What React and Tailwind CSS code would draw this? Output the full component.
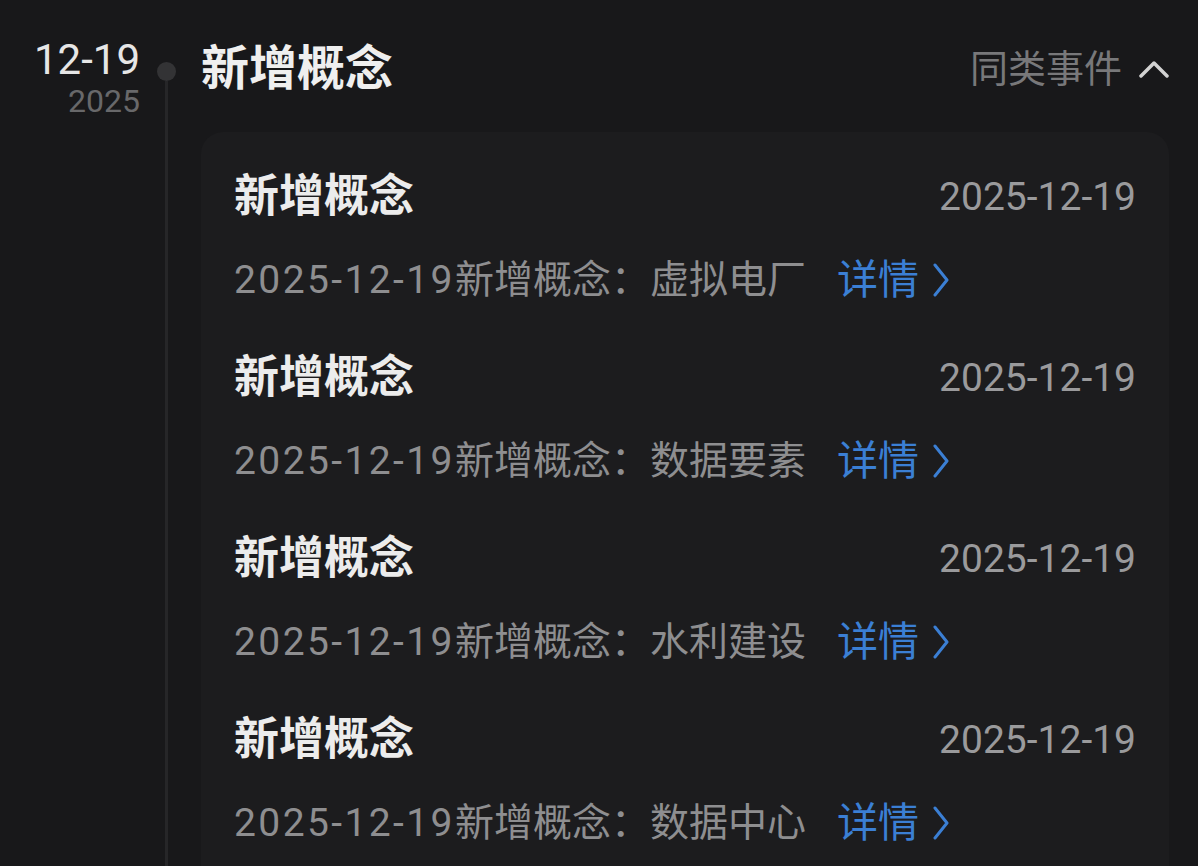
import React from 'react'

const items = ['虚拟电厂', '数据要素', '水利建设', '数据中心']

const font = { fontFamily: 'Roboto, "Noto Sans CJK SC", sans-serif' }

function ChevronRight() {
  return (
    <svg width="18" height="34" viewBox="0 0 18 34" className="ml-[13px]">
      <path d="M3 2 L15 17 L3 32" fill="none" stroke="#3b7fd4" strokeWidth="3" strokeLinecap="round" strokeLinejoin="round" />
    </svg>
  )
}

function EventItem({ name }) {
  return (
    <div className="flex flex-col">
      <div className="flex items-center justify-between h-[60px]">
        <span className="text-[45px] font-bold text-[#ececec] leading-[60px]">新增概念</span>
        <span className="text-[39px] text-[#9a9a9c] leading-[60px]">2025-12-19</span>
      </div>
      <div className="flex items-center h-[56px] mt-[25px]">
        <span className="text-[39px] text-[#8e8e90] leading-[56px]">
          <span className="tracking-[2.4px]">2025-12-19</span>新增概念：{name}
        </span>
        <span className="ml-[31px] flex items-center text-[41px] text-[#3b7fd4] leading-[56px]">
          详情
          <ChevronRight />
        </span>
      </div>
    </div>
  )
}

export default function App() {
  return (
    <div className="w-[1198px] h-[866px] overflow-hidden bg-[#18181a] flex" style={font}>
      <div className="w-[140px] shrink-0 flex flex-col items-end pt-[35px]">
        <span className="text-[42px] text-[#e6e6e6] leading-[50px]">12-19</span>
        <span className="text-[32px] text-[#68686a] leading-[34px] -mt-[1px]">2025</span>
      </div>
      <div className="w-[52px] shrink-0 flex flex-col items-center pt-[62px]">
        <div className="w-[19px] h-[19px] rounded-full bg-[#333335]" />
        <div className="w-[3px] flex-1 bg-[#262628]" />
      </div>
      <div className="flex-1 pl-[9px] pr-[29px] flex flex-col">
        <div className="flex items-center justify-between h-[80px] mt-[29px]">
          <span className="text-[48px] font-bold text-[#efefef] leading-[80px]">新增概念</span>
          <span className="flex items-center text-[38px] text-[#78787a]">
            同类事件
            <svg width="30" height="18" viewBox="0 0 30 18" className="ml-[17px]">
              <path d="M2 16 L15 3 L28 16" fill="none" stroke="#d2d2d2" strokeWidth="3.5" strokeLinecap="round" strokeLinejoin="round" />
            </svg>
          </span>
        </div>
        <div className="mt-[23px] bg-[#1c1c1e] rounded-[22px] pt-[35px] pb-[40px] px-[33px] flex flex-col gap-[40px]">
          {items.map((n) => (
            <EventItem key={n} name={n} />
          ))}
        </div>
      </div>
    </div>
  )
}
